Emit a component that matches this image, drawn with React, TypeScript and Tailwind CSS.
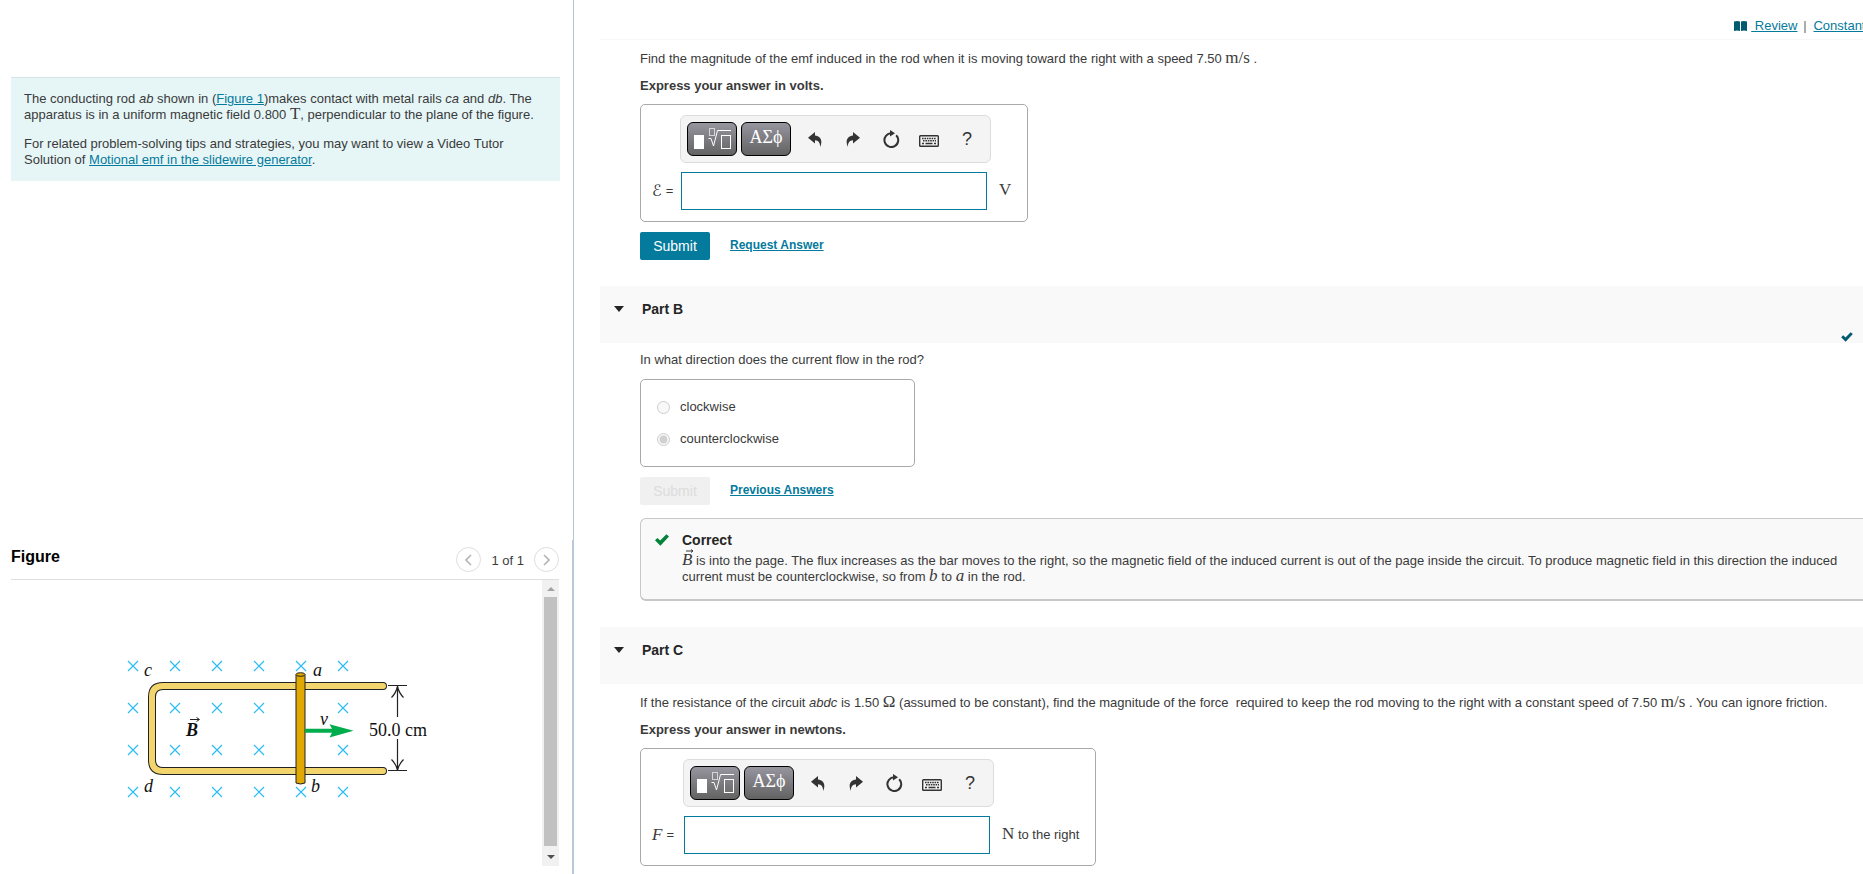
import { useState } from 'react';
import type { ReactNode } from 'react';

// zero line height keeps the larger serif glyphs from stretching the line
function MathText({ children, italic = false }: { children: ReactNode; italic?: boolean }) {
  return (
    <span className={`font-['Liberation_Serif',serif] text-[17px] leading-[0] ${italic ? 'italic' : ''}`}>
      {children}
    </span>
  );
}

function CheckIcon({ className }: { className: string }) {
  return (
    <svg className={className} viewBox="0 0 14 12" fill="currentColor" aria-hidden="true">
      <path d="M0 6.3 2.4 4 5.2 6.6 11.4 0.2 14 2.5 5.4 11.8Z" />
    </svg>
  );
}

function Toolbar() {
  const mathButton =
    'flex h-[34px] w-[50px] items-center justify-center rounded-md border border-black bg-linear-to-b from-[#97959f] to-[#636363] text-white';
  const iconButton = 'flex h-[34px] w-[38px] items-center justify-center';

  return (
    <div className="flex h-12 w-[311px] items-center rounded-md border border-[#dcdcdc] bg-[#f4f4f4] pl-[6px] text-[#333]">
      <button className={mathButton} aria-label="Templates">
        <svg width="38" height="22" viewBox="0 0 38 22" fill="none" stroke="currentColor">
          <rect x="1" y="7" width="10" height="14" fill="currentColor" stroke="none" />
          <rect x="16.500" y="0.500" width="5" height="7" stroke="#d5d5d5" />
          <path d="M15.500 10.500H18L20.500 18 24.500 2.500H38" />
          <rect x="28.500" y="7.500" width="9" height="13" />
        </svg>
      </button>
      <button className={`${mathButton} ml-1 mr-[5px] pb-1 font-['Liberation_Serif',serif] text-lg`}>ΑΣϕ</button>
      <button className={iconButton} aria-label="Undo">
        <svg width="14" height="15" viewBox="0 0 14 15" fill="currentColor">
          <path d="M0 5.800 7 0V3.500C12.500 4 15 8.500 12.200 15 12 10.500 10.500 8.600 7 8.300V11.500Z" />
        </svg>
      </button>
      <button className={iconButton} aria-label="Redo">
        <svg width="14" height="15" viewBox="0 0 14 15" fill="currentColor">
          <path d="M14 5.800 7 0V3.500C1.500 4-1 8.500 1.800 15 2 10.500 3.500 8.600 7 8.300V11.500Z" />
        </svg>
      </button>
      <button className={iconButton} aria-label="Reset">
        <svg width="18" height="18" viewBox="0 0 18 18" fill="none" stroke="currentColor">
          <path d="M9.500 3.200A6.900 6.900 0 1 0 14.200 5.200" strokeWidth="2" />
          <path d="M8 0 13 3.300 8 6.600Z" fill="currentColor" stroke="none" />
        </svg>
      </button>
      <button className={iconButton} aria-label="Keyboard shortcuts">
        <svg className="mt-1" width="20" height="12" viewBox="0 0 20 12" fill="none" stroke="currentColor">
          <rect x="0.700" y="0.700" width="18.600" height="10.600" rx="0.800" strokeWidth="1.400" />
          <path d="M3 3.500H17M4 5.700H17" strokeWidth="1.500" strokeDasharray="1.600 0.800" />
          <path d="M3 8.500H5M6.500 8.500H13.500M15 8.500H17" strokeWidth="1.500" />
        </svg>
      </button>
      <button className={`${iconButton} text-lg`} aria-label="Help">
        ?
      </button>
    </div>
  );
}

interface AnswerBoxProps {
  id: string;
  symbol: ReactNode;
  unit: ReactNode;
  labelWidth: string;
}

function AnswerBox({ id, symbol, unit, labelWidth }: AnswerBoxProps) {
  const [value, setValue] = useState('');

  return (
    <div className="grid w-fit grid-cols-[auto_auto] rounded-[5px] border border-[#a9a9a9] pt-[10px] pr-4 pb-[11px] pl-[11px]">
      <div />
      <Toolbar />
      <label htmlFor={id} className={`flex items-center gap-1 pt-[9px] ${labelWidth}`}>
        {symbol}
        <span>=</span>
      </label>
      <div className="flex items-center pt-[9px]">
        <input
          id={id}
          value={value}
          onChange={(e) => setValue(e.target.value)}
          className="ml-px h-[38px] w-[306px] border border-[#047a9c] px-2 outline-none"
        />
        <span className="ml-3">{unit}</span>
      </div>
    </div>
  );
}

function PartHeader({ title, done = false }: { title: string; done?: boolean }) {
  return (
    <header className="flex h-[57px] items-start justify-between bg-[#f9f9f9] pt-[15px] pr-[10px] pl-[14px]">
      <button className="flex items-center gap-[18px] text-sm leading-4 font-bold text-[#252525]">
        <svg width="10" height="6" viewBox="0 0 10 6" fill="currentColor">
          <path d="M0 0H10L5 6Z" />
        </svg>
        <h2>{title}</h2>
      </button>
      {done && <CheckIcon className="mt-[31px] h-[10px] w-3 text-[#005a70]" />}
    </header>
  );
}

const crossColumns = [133, 175, 217, 259, 301, 343];
const crossRows = [666, 708, 750, 792];

function RailsFigure() {
  return (
    <svg
      className="ml-[113px] h-[160px] w-[310px] shrink-0"
      viewBox="124 652 310 160"
      role="img"
      aria-label="Rod ab sliding on metal rails in a uniform magnetic field"
    >
      <g stroke="#2bbdf0" strokeWidth="1.200">
        {crossRows.map((y, row) =>
          crossColumns
            // the rod hides the two middle crosses of its column
            .filter((x) => !(x === 301 && (row === 1 || row === 2)))
            .map((x) => <path key={`${x}-${y}`} d={`M${x - 5} ${y - 5}l10 10m0-10l-10 10`} />),
        )}
      </g>
      <g fill="none" strokeLinecap="round">
        <path d="M383 686H163Q152 686 152 697V760Q152 771 163 771H383" stroke="#222" strokeWidth="8" />
        <path d="M383 686H163Q152 686 152 697V760Q152 771 163 771H383" stroke="#f2d66d" strokeWidth="6" />
      </g>
      <path d="M296 674.500V783Q300.500 785 305 783V674.500" fill="#e0a800" stroke="#222" />
      <ellipse cx="300.500" cy="674.500" rx="4.500" ry="1.800" fill="#e0a800" stroke="#222" />
      <path d="M305 728.800H332L329.500 724.200 353.500 730.800 329.500 737.500 332 732.800H305Z" fill="#00ad4d" />
      <g fill="none" stroke="#222" strokeWidth="1.200">
        <path d="M388 685.500H407M388 770.500H407M397.500 686V717M397.500 739V770" />
        <path d="M391.500 697.500Q396 693 397.500 686.500 399 693 403.500 697.500M391.500 759.500Q396 764 397.500 770 399 764 403.500 759.500" />
        <path d="M190 719.500H199M196.500 717.500 199.500 719.500 196.500 721.500" strokeWidth="1" />
      </g>
      <g className="font-['Liberation_Serif',serif] text-lg italic" fill="#111">
        <text x="144" y="676">c</text>
        <text x="313" y="676">a</text>
        <text x="144" y="792">d</text>
        <text x="311" y="792">b</text>
        <text x="320" y="725">v</text>
        <text x="186" y="736" className="font-bold">B</text>
        <text x="369" y="736" className="not-italic">50.0 cm</text>
      </g>
    </svg>
  );
}

const link = 'text-[#047a9c] underline';
const navButton =
  'flex size-[25px] items-center justify-center rounded-full border border-[#dedede] text-[#b5b5b5]';

function LeftColumn() {
  return (
    <aside className="flex w-[574px] shrink-0 flex-col">
      <section className="flex-1 border-r border-[#b6c6d6] pt-[77px] pr-[13px] pl-[11px]">
        <div className="border-t border-[#d5e5e5] bg-[#e6f6f7] pt-[13px] pr-6 pb-[13px] pl-[13px]">
          <p>
            The conducting rod <i>ab</i> shown in (<a href="#figure" className={link}>Figure 1</a>)makes contact
            with metal rails <i>ca</i> and <i>db</i>. The apparatus is in a uniform magnetic field 0.800{' '}
            <MathText>T</MathText>, perpendicular to the plane of the figure.
          </p>
          <p className="mt-[13px]">
            For related problem-solving tips and strategies, you may want to view a Video Tutor Solution of{' '}
            <a href="#video" className={link}>Motional emf in the slidewire generator</a>.
          </p>
        </div>
      </section>

      <section id="figure" className="h-[334px] border-r-2 border-[#b8c9dc] pr-[13px] pl-[11px]">
        <div className="flex h-10 items-center justify-between border-b border-[#dedede]">
          <h2 className="pb-[6px] text-base font-bold text-black">Figure</h2>
          <div className="flex items-center gap-[10px]">
            <button className={navButton} aria-label="Previous figure">
              <svg width="7" height="12" viewBox="0 0 7 12" fill="none" stroke="currentColor" strokeWidth="1.600">
                <path d="M6 1 1 6 6 11" />
              </svg>
            </button>
            <span className="pt-[2px]">1 of 1</span>
            <button className={navButton} aria-label="Next figure">
              <svg width="7" height="12" viewBox="0 0 7 12" fill="none" stroke="currentColor" strokeWidth="1.600">
                <path d="M1 1 6 6 1 11" />
              </svg>
            </button>
          </div>
        </div>
        <div className="flex h-[286px] justify-between">
          <div className="flex items-start pt-[72px]">
            <RailsFigure />
          </div>
          <div className="flex w-[17px] flex-col items-center justify-between bg-[#f1f1f1]">
            <svg className="h-[17px] w-2" viewBox="0 0 8 17" fill="#a3a3a3">
              <path d="M0 11 4 7 8 11Z" />
            </svg>
            <div className="mb-[3px] w-[13px] flex-1 bg-[#c1c1c1]" />
            <svg className="h-[17px] w-2" viewBox="0 0 8 17" fill="#505050">
              <path d="M0 6 4 10 8 6Z" />
            </svg>
          </div>
        </div>
      </section>
    </aside>
  );
}

export default function App() {
  return (
    <div className="flex h-screen overflow-hidden bg-white font-['Liberation_Sans',Arial,sans-serif] text-[13px] leading-4 text-[#3a3a3a]">
      <LeftColumn />

      <main className="min-w-0 flex-1 overflow-hidden pl-[26px]">
        <nav className="flex h-10 justify-end border-b border-[#f7f7f7] pt-[18px]">
          <div className="-mr-[9px] flex items-start whitespace-pre">
            <svg className="mt-[3px] mr-1 text-[#005a70]" width="13" height="10" viewBox="0 0 13 10" fill="currentColor">
              <path d="M0 0.500Q3.500-0.300 6 0.500V10Q3 9.200 0 10ZM7 0.500Q9.500-0.300 13 0.500V10Q10 9.200 7 10Z" />
            </svg>
            <a href="#review" className={link}> Review</a>
            <span className="mx-[7px] mt-[3px] h-3 w-[2px] bg-[#adadad]" />
            <a href="#constants" className={link}>Constants</a>
          </div>
        </nav>

        <section className="pl-10">
          <p className="pt-[11px]">
            Find the magnitude of the emf induced in the rod when it is moving toward the right with a speed 7.50{' '}
            <MathText>m/s</MathText> .
          </p>
          <p className="mt-[11px] mb-[10px] font-bold">Express your answer in volts.</p>
          <AnswerBox
            id="emf"
            labelWidth="w-[28px]"
            symbol={<span className="font-['DejaVu_Serif','DejaVu_Sans',serif] text-base leading-4">ℰ</span>}
            unit={<MathText>V</MathText>}
          />
          <div className="mt-[10px] flex items-start gap-5">
            <button className="h-7 w-[70px] rounded-[2px] bg-[#047a9c] text-sm text-white">Submit</button>
            <a href="#request" className={`${link} mt-[5px] text-xs leading-4 font-bold`}>Request Answer</a>
          </div>
        </section>

        <div className="mt-[26px]">
          <PartHeader title="Part B" done />
        </div>
        <section className="pl-10">
          <p className="mt-[9px] mb-[11px]">In what direction does the current flow in the rod?</p>
          <div className="flex h-[88px] w-[275px] flex-col gap-4 rounded-[5px] border border-[#a9a9a9] pt-[19px] pl-[16px]">
            <label className="flex items-center gap-[10px]">
              <input type="radio" name="direction" disabled />
              clockwise
            </label>
            <label className="flex items-center gap-[10px]">
              <input type="radio" name="direction" disabled defaultChecked />
              counterclockwise
            </label>
          </div>
          <div className="mt-[10px] flex items-start gap-5">
            <button disabled className="h-7 w-[70px] rounded-[2px] bg-[#f0f0f0] text-sm text-[#dcdcdc]">
              Submit
            </button>
            <a href="#previous" className={`${link} mt-[5px] text-xs leading-4 font-bold`}>Previous Answers</a>
          </div>

          <div className="mt-[13px] flex items-start gap-[13px] rounded-l-[6px] border border-r-0 border-b-2 border-[#c7c7c7] bg-[#f9f9f9] pt-[13px] pr-4 pb-[14px] pl-[14px]">
            <CheckIcon className="mt-[2px] h-3 w-[14px] shrink-0 text-[#038238]" />
            <div>
              <h3 className="text-sm leading-4 font-bold text-[#252525]">Correct</h3>
              <p className="mt-[5px]">
                <span className="relative">
                  <MathText italic>B</MathText>
                  <svg className="absolute -top-1 left-1" width="8" height="4" viewBox="0 0 8 4" fill="none" stroke="currentColor">
                    <path d="M0 2H7M5 0.500 7 2 5 3.500" />
                  </svg>
                </span>{' '}
                is into the page. The flux increases as the bar moves to the right, so the magnetic field of the
                induced current is out of the page inside the circuit. To produce magnetic field in this direction the
                induced current must be counterclockwise, so from <MathText italic>b</MathText> to{' '}
                <MathText italic>a</MathText> in the rod.
              </p>
            </div>
          </div>
        </section>

        <div className="mt-[26px]">
          <PartHeader title="Part C" />
        </div>
        <section className="pl-10">
          <p className="mt-[11px]">
            If the resistance of the circuit <i>abdc</i> is 1.50 <MathText>Ω</MathText> (assumed to be constant), find
            the magnitude of the force&nbsp; required to keep the rod moving to the right with a constant speed of
            7.50 <MathText>m/s</MathText> . You can ignore friction.
          </p>
          <p className="mt-[11px] mb-[10px] font-bold">Express your answer in newtons.</p>
          <AnswerBox
            id="force"
            labelWidth="w-[31px]"
            symbol={<MathText italic>F</MathText>}
            unit={
              <>
                <MathText>N</MathText> to the right
              </>
            }
          />
        </section>
      </main>
    </div>
  );
}
